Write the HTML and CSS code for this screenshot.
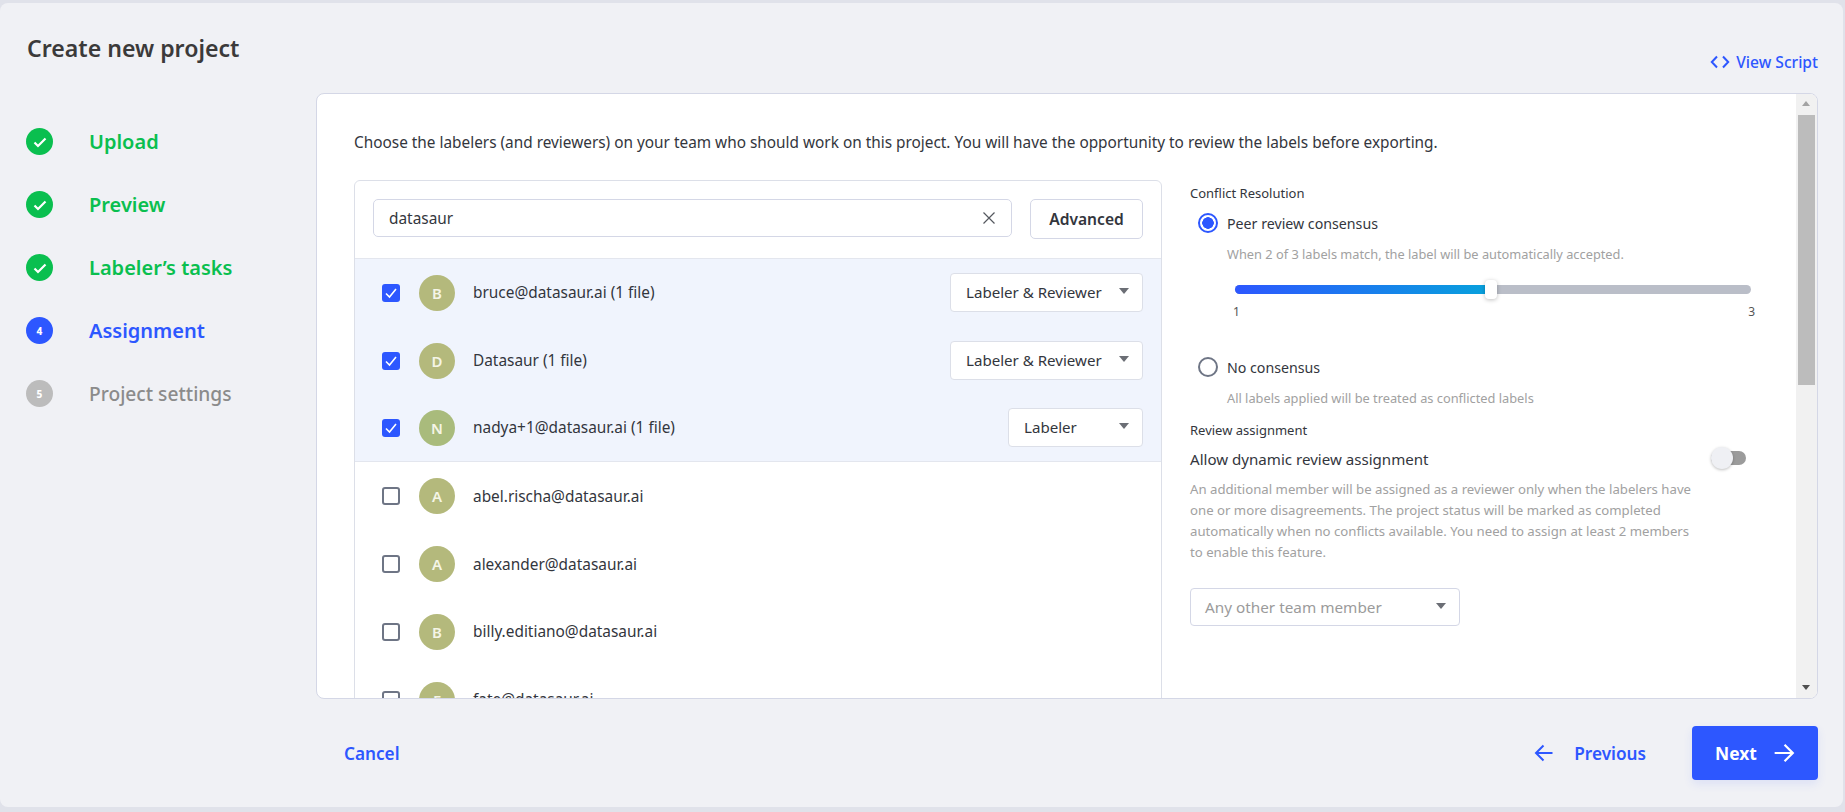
FILE: index.html

```html
<!DOCTYPE html>
<html lang="en">
<head>
  <meta charset="UTF-8" />
  <meta name="viewport" content="width=device-width, initial-scale=1" />
  <title>Create new project</title>
  <link rel="stylesheet" href="styles.css">
</head>
<body>
  <div class="card">
    <aside class="sidebar">
      <h1>Create new project</h1>
      <ol class="steps">
        <li class="step done">
          <span class="step-dot"><svg viewBox="0 0 16 16" width="16" height="16"><path d="M2.5 8.5l3.5 3.5 7.5-7.5" fill="none" stroke="#fff" stroke-width="2.2"/></svg></span>
          Upload
        </li>
        <li class="step done">
          <span class="step-dot"><svg viewBox="0 0 16 16" width="16" height="16"><path d="M2.5 8.5l3.5 3.5 7.5-7.5" fill="none" stroke="#fff" stroke-width="2.2"/></svg></span>
          Preview
        </li>
        <li class="step done">
          <span class="step-dot"><svg viewBox="0 0 16 16" width="16" height="16"><path d="M2.5 8.5l3.5 3.5 7.5-7.5" fill="none" stroke="#fff" stroke-width="2.2"/></svg></span>
          Labeler’s tasks
        </li>
        <li class="step active"><span class="step-dot">4</span>Assignment</li>
        <li class="step todo"><span class="step-dot">5</span>Project settings</li>
      </ol>
    </aside>

    <main class="main">
      <div class="top-row">
        <a class="script-link">
          <svg viewBox="0 0 20 14" width="20" height="14"><path d="M7 1.5L1.8 7 7 12.5M13 1.5L18.2 7 13 12.5" fill="none" stroke="#2d57ff" stroke-width="2"/></svg>
          View Script
        </a>
      </div>

      <section class="panel">
        <div class="panel-body">
          <p class="intro">Choose the labelers (and reviewers) on your team who should work on this project. You will have the opportunity to review the labels before exporting.</p>
          <div class="columns">
            <div class="members">
              <div class="search-row">
                <div class="search">
                  <input class="search-input" type="text" value="datasaur" />
                  <svg viewBox="0 0 14 14" width="14" height="14"><path d="M1.5 1.5l11 11M12.5 1.5l-11 11" fill="none" stroke="#55585f" stroke-width="1.2"/></svg>
                </div>
                <button class="btn-advanced">Advanced</button>
              </div>

              <div class="member selected">
                <span class="checkbox checked"><svg viewBox="0 0 18 18" width="18" height="18"><path d="M4 9.5l3.5 3.5L14 5" fill="none" stroke="#fff" stroke-width="1.6"/></svg></span>
                <span class="avatar">B</span>
                <span class="member-name">bruce@datasaur.ai (1 file)</span>
                <span class="role role-wide">Labeler &amp; Reviewer<i class="caret"></i></span>
              </div>
              <div class="member selected">
                <span class="checkbox checked"><svg viewBox="0 0 18 18" width="18" height="18"><path d="M4 9.5l3.5 3.5L14 5" fill="none" stroke="#fff" stroke-width="1.6"/></svg></span>
                <span class="avatar">D</span>
                <span class="member-name">Datasaur (1 file)</span>
                <span class="role role-wide">Labeler &amp; Reviewer<i class="caret"></i></span>
              </div>
              <div class="member selected last-selected">
                <span class="checkbox checked"><svg viewBox="0 0 18 18" width="18" height="18"><path d="M4 9.5l3.5 3.5L14 5" fill="none" stroke="#fff" stroke-width="1.6"/></svg></span>
                <span class="avatar avatar-green">N</span>
                <span class="member-name">nadya+1@datasaur.ai (1 file)</span>
                <span class="role role-narrow">Labeler<i class="caret"></i></span>
              </div>
              <div class="member">
                <span class="checkbox"></span>
                <span class="avatar">A</span>
                <span class="member-name">abel.rischa@datasaur.ai</span>
              </div>
              <div class="member">
                <span class="checkbox"></span>
                <span class="avatar">A</span>
                <span class="member-name">alexander@datasaur.ai</span>
              </div>
              <div class="member">
                <span class="checkbox"></span>
                <span class="avatar">B</span>
                <span class="member-name">billy.editiano@datasaur.ai</span>
              </div>
              <div class="member">
                <span class="checkbox"></span>
                <span class="avatar">F</span>
                <span class="member-name">fate@datasaur.ai</span>
              </div>
            </div>

            <div class="options">
              <h3 class="option-title">Conflict Resolution</h3>
              <div class="radio-row"><span class="radio on"></span>Peer review consensus</div>
              <p class="radio-desc">When 2 of 3 labels match, the label will be automatically accepted.</p>
              <div class="slider">
                <div class="slider-track"><div class="slider-fill"></div><span class="slider-thumb"></span></div>
                <div class="slider-labels"><span>1</span><span>3</span></div>
              </div>
              <div class="radio-row radio-second"><span class="radio"></span>No consensus</div>
              <p class="radio-desc">All labels applied will be treated as conflicted labels</p>

              <h3 class="option-title review-title">Review assignment</h3>
              <div class="toggle-row">
                <span>Allow dynamic review assignment</span>
                <span class="toggle"><span class="toggle-knob"></span></span>
              </div>
              <p class="help">An additional member will be assigned as a reviewer only when the labelers have one or more disagreements. The project status will be marked as completed automatically when no conflicts available. You need to assign at least 2 members to enable this feature.</p>
              <div class="other-select">Any other team member<i class="caret"></i></div>
            </div>
          </div>
        </div>
        <div class="scrollbar">
          <span class="scroll-up"></span>
          <span class="scroll-thumb"></span>
          <span class="scroll-down"></span>
        </div>
      </section>

      <footer class="footer">
        <a class="cancel">Cancel</a>
        <div class="footer-right">
          <a class="previous">
            <svg viewBox="0 0 20 18" width="20" height="18"><path d="M18.5 9H2M9.5 1.5L2 9l7.5 7.5" fill="none" stroke="#2d57ff" stroke-width="2"/></svg>
            Previous
          </a>
          <button class="btn-next">
            Next
            <svg viewBox="0 0 20 18" width="22" height="20"><path d="M1.5 9H18M10.5 1.5L18 9l-7.5 7.5" fill="none" stroke="#fff" stroke-width="2"/></svg>
          </button>
        </div>
      </footer>
    </main>
  </div>
</body>
</html>
```

FILE: styles.css

```css
* {
  box-sizing: border-box;
}
html, body {
  margin: 0;
  height: 812px;
  overflow: hidden;
}
body {
  background: #e0e2ea;
  padding: 3px 2px 5px 0;
  font-family: "Noto Sans", "Open Sans", sans-serif;
  font-size: 15.4px;
  color: #33363d;
}
.card {
  display: grid;
  grid-template-columns: 316px 1fr;
  height: 804px;
  padding-right: 25px;
  background: #f0f1f5;
  border-radius: 8px;
}

/* sidebar */
.sidebar {
  padding-left: 26px;
}
h1 {
  margin: 0;
  padding: 30px 0 0 1px;
  height: 107px;
  font-size: 23.1px;
  line-height: 30px;
  font-weight: 600;
  color: #3b3a3a;
}
.steps {
  list-style: none;
  margin: 0;
  padding: 0;
}
.step {
  display: flex;
  align-items: center;
  gap: 36px;
  height: 63px;
  font-size: 20px;
  font-weight: 600;
}
.step-dot {
  display: flex;
  align-items: center;
  justify-content: center;
  width: 27px;
  height: 27px;
  border-radius: 50%;
  color: #fff;
  font-size: 10px;
  font-weight: 800;
}
.done { color: #0abf4f; }
.done .step-dot { background: #0abf4f; }
.active { color: #2d57ff; }
.active .step-dot { background: #2d57ff; }
.todo { color: #8b8b8b; font-weight: 500; font-size: 19.2px; }
.todo .step-dot { background: #bcbcbc; }

/* main column */
.main {
  display: flex;
  flex-direction: column;
  min-width: 0;
}
.top-row {
  display: flex;
  justify-content: flex-end;
  align-items: center;
  height: 90px;
  padding-top: 27px;
}
.script-link {
  display: flex;
  align-items: center;
  gap: 6px;
  color: #2d57ff;
  font-size: 15.6px;
  font-weight: 500;
}
.panel {
  display: flex;
  height: 606px;
  background: #fff;
  border: 1px solid #d4d7e6;
  border-radius: 8px;
  overflow: hidden;
}
.panel-body {
  flex: 1;
  min-width: 0;
  padding-left: 37px;
}
.intro {
  margin: 0;
  padding-top: 39px;
  height: 86px;
  font-size: 15.36px;
  line-height: 20px;
}
.columns {
  display: flex;
}

/* member list */
.members {
  flex: none;
  width: 808px;
  height: 600px;
  border: 1px solid #dcdfe8;
  border-radius: 6px 6px 0 0;
}
.search-row {
  display: flex;
  gap: 18px;
  height: 78px;
  padding: 18px 18px 0;
  border-bottom: 1px solid #e3e6ee;
}
.search {
  display: flex;
  align-items: center;
  flex: 1;
  height: 38px;
  padding: 0 15px;
  border: 1px solid #d4d7e6;
  border-radius: 5px;
}
.search-input {
  flex: 1;
  min-width: 0;
  border: 0;
  outline: 0;
  padding: 0;
  font: inherit;
  color: #33363d;
}
.btn-advanced {
  width: 113px;
  height: 40px;
  background: #fff;
  border: 1px solid #d4d7e6;
  border-radius: 5px;
  font: inherit;
  font-size: 15.6px;
  font-weight: 600;
  color: #33363d;
}
.member {
  display: flex;
  align-items: center;
  height: 67.8px;
  padding: 0 18px 0 27px;
}
.selected {
  background: #f0f4fd;
}
.last-selected {
  border-bottom: 1px solid #e3e6ee;
}
.checkbox {
  flex: none;
  width: 18px;
  height: 18px;
  border: 2px solid #6e7585;
  border-radius: 3px;
}
.checkbox.checked {
  background: #2d57ff;
  border: 0;
}
.checkbox svg {
  display: block;
}
.avatar {
  flex: none;
  display: flex;
  align-items: center;
  justify-content: center;
  width: 36px;
  height: 36px;
  margin: 0 18px 0 19px;
  border-radius: 50%;
  background: #b4b97c;
  color: #f5f5e6;
  font-size: 15px;
  font-weight: 600;
}
.avatar-green {
  background: #a9bb7c;
}
.member-name {
  flex: 1;
}
.role {
  position: relative;
  height: 39px;
  padding: 0 15px;
  background: #fff;
  border: 1px solid #dcdfe8;
  border-radius: 4px;
  font-size: 15.1px;
  line-height: 37px;
}
.role-wide { width: 193px; }
.role-narrow { width: 135px; }
.caret {
  position: absolute;
  right: 13px;
  top: 14px;
  width: 0;
  height: 0;
  border-left: 5px solid transparent;
  border-right: 5px solid transparent;
  border-top: 6px solid #6b6e75;
}

/* options column */
.options {
  flex: 1;
  padding: 4px 0 0 28px;
}
.option-title {
  margin: 0;
  font-size: 13px;
  line-height: 18px;
  font-weight: 400;
}
.radio-row {
  display: flex;
  align-items: center;
  gap: 9px;
  height: 24px;
  margin: 9px 0 0 8px;
  font-size: 14.2px;
}
.radio-second {
  margin-top: 0;
}
.radio {
  flex: none;
  width: 20px;
  height: 20px;
  border: 2px solid #6e7585;
  border-radius: 50%;
}
.radio.on {
  border-color: #2d57ff;
  background: radial-gradient(circle, #2d57ff 0 5.5px, #fff 6px);
}
.radio-desc {
  margin: 10px 0 0 37px;
  font-size: 12.8px;
  line-height: 18px;
  color: #a1a1a1;
}
.slider {
  width: 565px;
  height: 92px;
  padding: 22px 4px 0 45px;
}
.slider-track {
  position: relative;
  height: 9px;
  background: #babec8;
  border-radius: 5px;
}
.slider-fill {
  width: 50%;
  height: 100%;
  background: linear-gradient(90deg, #2d57ff, #07a2dc);
  border-radius: 5px 0 0 5px;
}
.slider-thumb {
  position: absolute;
  left: 250px;
  top: -5px;
  width: 12px;
  height: 19px;
  background: #fff;
  border-radius: 4px;
  box-shadow: 0 1px 4px rgb(0 0 0 / 0.25);
}
.slider-labels {
  display: flex;
  justify-content: space-between;
  margin: 10px -4px 0 -2px;
  font-size: 12px;
  line-height: 16px;
  color: #555;
}
.review-title {
  margin-top: 14px;
}
.toggle-row {
  display: flex;
  justify-content: space-between;
  align-items: center;
  width: 556px;
  height: 24px;
  margin-top: 8px;
  font-size: 15.1px;
}
.toggle {
  position: relative;
  display: block;
  width: 35px;
  height: 14px;
  margin-top: -2px;
  background: #9b9b9b;
  border-radius: 7px;
}
.toggle-knob {
  position: absolute;
  left: 0;
  top: -4px;
  width: 22px;
  height: 22px;
  background: #eff0f4;
  border-radius: 50%;
  box-shadow: 0 1px 3px rgb(0 0 0 / 0.25);
}
.help {
  width: 505px;
  margin: 8px 0 0;
  font-size: 13.2px;
  line-height: 21px;
  color: #a1a1a1;
}
.other-select {
  position: relative;
  width: 270px;
  height: 38px;
  margin-top: 25px;
  padding: 0 14px;
  border: 1px solid #d4d7e6;
  border-radius: 4px;
  font-size: 15.3px;
  line-height: 36px;
  color: #9b9b9b;
}

/* scrollbar */
.scrollbar {
  flex: none;
  position: relative;
  width: 21px;
  background: #f1f1f1;
  padding: 0 2px;
}
.scroll-up, .scroll-down {
  position: absolute;
  left: 6px;
  width: 0;
  height: 0;
  border-left: 4px solid transparent;
  border-right: 4px solid transparent;
}
.scroll-up {
  top: 7px;
  border-bottom: 5px solid #a3a3a3;
}
.scroll-down {
  bottom: 8px;
  border-top: 5px solid #505050;
}
.scroll-thumb {
  display: block;
  height: 270px;
  margin-top: 21px;
  background: #bcbcbc;
}

/* footer */
.footer {
  display: flex;
  align-items: center;
  justify-content: space-between;
  flex: 1;
  padding: 0 0 0 28px;
}
.cancel, .previous {
  color: #2d57ff;
  font-size: 17.2px;
  font-weight: 600;
}
.footer-right {
  display: flex;
  align-items: center;
  gap: 46px;
}
.previous {
  display: flex;
  align-items: center;
  gap: 20px;
}
.btn-next {
  display: flex;
  align-items: center;
  justify-content: center;
  gap: 16px;
  width: 126px;
  height: 54px;
  background: #2d57ff;
  border: 0;
  border-radius: 4px;
  color: #fff;
  font: inherit;
  font-size: 17.4px;
  font-weight: 700;
  box-shadow: 0 4px 10px rgb(45 87 255 / 0.1);
}
```
